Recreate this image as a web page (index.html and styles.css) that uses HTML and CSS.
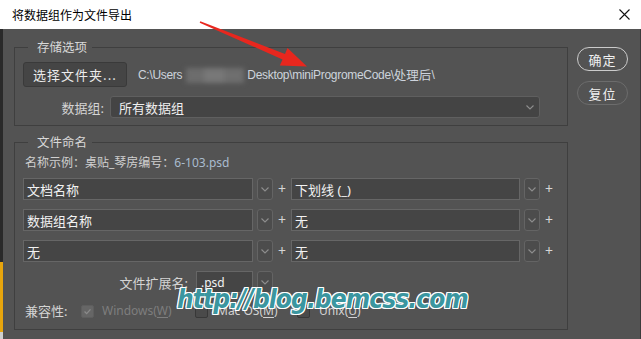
FILE: index.html
```html
<!DOCTYPE html>
<html lang="zh-CN">
<head>
<meta charset="utf-8">
<title>将数据组作为文件导出</title>
<link rel="stylesheet" href="styles.css">
</head>
<body>
<div class="titlebar">
  <span class="title">将数据组作为文件导出</span>
  <svg class="close" viewBox="0 0 11 11"><path d="M0.5 0.5 L10.5 10.5 M10.5 0.5 L0.5 10.5" stroke="#111" stroke-width="1.1" fill="none"/></svg>
</div>
<div class="frame">
  <div class="edge"></div>
  <div class="body">
    <div class="groups">
      <fieldset class="group g1">
        <legend>存储选项</legend>
        <div class="folder-row">
          <button class="btn-folder">选择文件夹...</button>
          <span class="path">C:\Users<span class="redact"><i class="b1"></i><i class="b2"></i><i class="b3"></i></span>Desktop\miniProgromeCode\<span class="cjk">处理后</span>\</span>
        </div>
        <div class="set-row">
          <span class="set-label">数据组:</span>
          <div class="select wide"><span>所有数据组</span><svg class="chev" viewBox="0 0 8 5"><polyline points="0.5,0.5 4,4 7.5,0.5" fill="none" stroke="#8e8e8e" stroke-width="1.1"/></svg></div>
        </div>
      </fieldset>
      <fieldset class="group g2">
        <legend>文件命名</legend>
        <div class="example">名称示例：桌贴_琴房编号：<span class="ex-value">6-103.psd</span></div>
        <div class="name-row">
          <div class="field f1">文档名称</div>
          <div class="chev-btn"><svg class="chev" viewBox="0 0 8 5"><polyline points="0.5,0.5 4,4 7.5,0.5" fill="none" stroke="#8e8e8e" stroke-width="1.1"/></svg></div>
          <span class="plus">+</span>
          <div class="field f2">下划线 (_)</div>
          <div class="chev-btn"><svg class="chev" viewBox="0 0 8 5"><polyline points="0.5,0.5 4,4 7.5,0.5" fill="none" stroke="#8e8e8e" stroke-width="1.1"/></svg></div>
          <span class="plus">+</span>
        </div>
        <div class="name-row">
          <div class="field f1">数据组名称</div>
          <div class="chev-btn"><svg class="chev" viewBox="0 0 8 5"><polyline points="0.5,0.5 4,4 7.5,0.5" fill="none" stroke="#8e8e8e" stroke-width="1.1"/></svg></div>
          <span class="plus">+</span>
          <div class="field f2">无</div>
          <div class="chev-btn"><svg class="chev" viewBox="0 0 8 5"><polyline points="0.5,0.5 4,4 7.5,0.5" fill="none" stroke="#8e8e8e" stroke-width="1.1"/></svg></div>
          <span class="plus">+</span>
        </div>
        <div class="name-row">
          <div class="field f1">无</div>
          <div class="chev-btn"><svg class="chev" viewBox="0 0 8 5"><polyline points="0.5,0.5 4,4 7.5,0.5" fill="none" stroke="#8e8e8e" stroke-width="1.1"/></svg></div>
          <span class="plus">+</span>
          <div class="field f2">无</div>
          <div class="chev-btn"><svg class="chev" viewBox="0 0 8 5"><polyline points="0.5,0.5 4,4 7.5,0.5" fill="none" stroke="#8e8e8e" stroke-width="1.1"/></svg></div>
          <span class="plus">+</span>
        </div>
        <div class="name-row ext-row">
          <div class="ext-cell">
            <span class="ext-label">文件扩展名:</span>
            <div class="field f-ext">.psd</div>
          </div>
          <div class="chev-btn"><svg class="chev" viewBox="0 0 8 5"><polyline points="0.5,0.5 4,4 7.5,0.5" fill="none" stroke="#8e8e8e" stroke-width="1.1"/></svg></div>
        </div>
        <div class="compat-row">
          <span class="compat-label">兼容性:</span>
          <span class="opt disabled"><span class="cb checked"><svg viewBox="0 0 13 13"><polyline points="3,6.5 5.5,9 10,4" fill="none" stroke="#8a8a8a" stroke-width="1.6"/></svg></span><span class="opt-text">Windows(<u>W</u>)</span></span>
          <span class="opt"><span class="cb"></span><span class="opt-text">Mac OS(<u>M</u>)</span></span>
          <span class="opt"><span class="cb"></span><span class="opt-text">Unix(<u>U</u>)</span></span>
        </div>
      </fieldset>
    </div>
    <div class="actions">
      <button class="pill primary">确定</button>
      <button class="pill">复位</button>
    </div>
  </div>
</div>
<svg class="arrow" viewBox="0 0 641 339"><polygon points="200.3,21.3 285.0,54.0 287.5,48.0 307,66.5 279.8,65.5 282.6,59.6 199.7,22.7" fill="#e8271e"/></svg>
<div class="watermark">http://blog.bemcss.com</div>
</body>
</html>
```

FILE: styles.css
```css
* { box-sizing: border-box; margin: 0; padding: 0; }
html, body { width: 641px; height: 339px; overflow: hidden; }
body {
  position: relative;
  background: #535353;
  color: #d6d6d6;
  font-family: "Noto Sans", "Noto Sans CJK SC", sans-serif;
  font-size: 13px;
}
.titlebar {
  height: 29px;
  background: #fff;
  color: #000;
  display: flex;
  align-items: center;
  justify-content: space-between;
  padding: 0 11px 0 12px;
  font-family: "Noto Sans CJK SC", sans-serif;
  font-size: 12px;
}
.close { width: 11px; height: 11px; margin-top: -1px; }
.frame { display: flex; height: 310px; }
.edge {
  width: 3px;
  background: linear-gradient(#2a2a2a 0 233px, #e7a50d 233px 303px, #cfcfcf 303px);
}
.body {
  flex: 1;
  display: flex;
  padding: 10px 12px 0 11px;
  border-right: 1px solid #3b3b3b;
}
.groups { width: 554px; display: flex; flex-direction: column; gap: 8px; }
.group {
  border: 1px solid #3f3f3f;
  padding: 7px 8px 7px 8px;
  min-width: 0;
}
.g2 { padding-top: 5px; padding-bottom: 10px; }
legend {
  margin-left: 5px;
  padding: 0 5px 0 9px;
  line-height: 16px;
  font-size: 12.5px;
  color: #d8d8d8;
  font-family: "Noto Sans CJK SC", sans-serif;
}
.folder-row { display: flex; align-items: center; gap: 11px; height: 25px; }
.btn-folder {
  width: 104px;
  height: 25px;
  background: #454545;
  border: 1px solid #3a3a3a;
  border-radius: 3px;
  color: #ececec;
  font-family: "Noto Sans CJK SC", sans-serif;
  font-size: 13px;
  letter-spacing: 1px;
}
.path {
  font-family: "Liberation Sans", sans-serif;
  font-size: 12px;
  letter-spacing: -0.3px;
  color: #cdd3dc;
  display: flex;
  align-items: center;
  white-space: nowrap;
}
.path .cjk { font-family: "Noto Sans CJK SC", sans-serif; font-size: 12.5px; letter-spacing: 0; }
.redact {
  display: inline-block;
  position: relative;
  width: 62px;
  height: 22px;
  margin: 0 1px 0 2px;
  filter: blur(2.5px);
}
.redact i { position: absolute; top: 4px; height: 15px; background: #727272; }
.redact .b1 { left: 2px; width: 20px; background: #6d6d6d; }
.redact .b2 { left: 20px; width: 22px; background: #787878; }
.redact .b3 { left: 40px; width: 20px; background: #6f6f6f; }
.set-row { display: flex; align-items: center; gap: 6px; margin-top: 9px; height: 22px; }
.set-label { width: 81px; text-align: right; font-size: 13px; color: #d4d4d4; }
.select {
  height: 22px;
  display: flex;
  align-items: center;
  justify-content: space-between;
  background: #444444;
  border: 1px solid #5f5f5f;
  border-radius: 3px;
  padding: 0 5px 0 8px;
  color: #efefef;
}
.select.wide { width: 430px; }
.chev { width: 8px; height: 5px; display: block; }
.example {
  padding-left: 2px;
  line-height: 16px;
  font-size: 12px;
  color: #d0d0d0;
  margin-bottom: 7px;
}
.ex-value { color: #a9bccf; }
.name-row { display: flex; align-items: center; height: 22px; margin-bottom: 9px; }
.field {
  height: 22px;
  display: flex;
  align-items: center;
  background: #454545;
  border: 1px solid #666666;
  padding-left: 3px;
  color: #f2f2f2;
  font-size: 13px;
  white-space: nowrap;
}
.f1 { width: 230px; }
.f2 { width: 229px; }
.chev-btn {
  width: 16px;
  height: 22px;
  margin-left: 4px;
  display: flex;
  align-items: center;
  justify-content: center;
  background: #4c4c4c;
  border: 1px solid #646464;
  border-radius: 3px;
}
.plus { width: 18px; text-align: center; color: #d6d6d6; font-size: 14px; line-height: 22px; }
.ext-row { margin-bottom: 10px; }
.ext-cell { width: 230px; display: flex; justify-content: flex-end; align-items: center; gap: 8px; }
.ext-label { font-size: 13px; color: #d4d4d4; }
.f-ext { width: 57px; padding-left: 4px; font-size: 12px; }
.compat-row {
  display: grid;
  grid-template-columns: 56px 114px 102px auto;
  align-items: center;
  padding-left: 2px;
  line-height: 16px;
  height: 16px;
  font-size: 12px;
}
.compat-label { font-size: 13px; color: #d4d4d4; }
.opt { display: flex; align-items: center; gap: 9px; color: #d2d2d2; white-space: nowrap; }
.opt.disabled { color: #7e7e7e; gap: 8px; }
.opt-text u { text-underline-offset: 2px; }
.cb {
  width: 13px;
  height: 13px;
  border-radius: 2px;
  background: #4a4a4a;
  border: 1px solid #383838;
  flex: none;
}
.cb.checked { background: #666666; border-color: #5e5e5e; }
.cb svg { display: block; width: 11px; height: 11px; }
.actions { width: 51px; margin-left: 9px; padding-top: 8px; display: flex; flex-direction: column; gap: 10px; }
.pill {
  width: 51px;
  height: 24px;
  border-radius: 12px;
  background: transparent;
  border: 1.5px solid #6c6c6c;
  color: #f0f0f0;
  font-family: "Noto Sans CJK SC", sans-serif;
  font-size: 13px;
  letter-spacing: 1px;
}
.pill.primary { border-color: #cbcbcb; }
.arrow { position: absolute; left: 0; top: 0; width: 641px; height: 339px; pointer-events: none; }
.watermark {
  position: absolute;
  left: 177px;
  top: 286px;
  font-family: "DejaVu Sans Condensed", "DejaVu Sans", sans-serif;
  font-stretch: condensed;
  font-weight: bold;
  font-style: oblique;
  font-size: 26px;
  line-height: 26px;
  letter-spacing: -0.9px;
  color: #3a96a0;
  white-space: nowrap;
  text-shadow: 1px 0 0 #fff, -1px 0 0 #fff, 0 1px 0 #fff, 0 -1px 0 #fff, 1px 1px 0 #fff, -1px -1px 0 #fff, 1px -1px 0 #fff, -1px 1px 0 #fff;
}
```
